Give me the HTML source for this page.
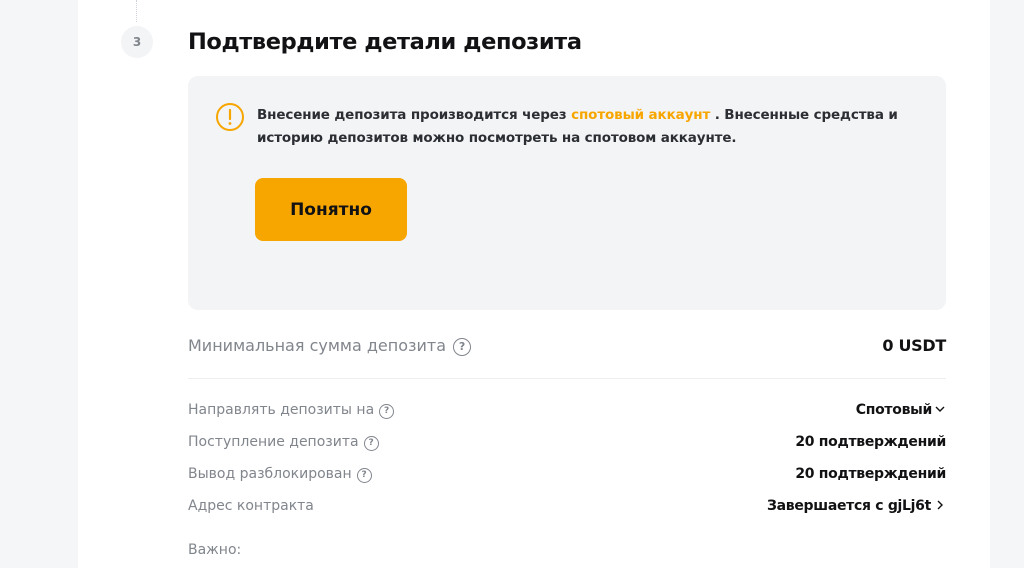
<!DOCTYPE html>
<html><head><meta charset="utf-8"><style>
*{margin:0;padding:0;box-sizing:border-box}
body{width:1024px;height:568px;overflow:hidden;background:#f5f6f8;font-family:"DejaVu Sans","Liberation Sans",sans-serif;color:#121214;position:relative}
.panel{position:absolute;left:78px;top:0;width:912px;height:568px;background:#fff}
.abs{position:absolute;white-space:nowrap}
.step{left:121px;top:26px;width:32px;height:32px;border-radius:50%;background:#f3f4f6;color:#81858c;font-size:12px;font-weight:bold;text-align:center;line-height:32px}
.dots{left:136px;top:0;height:22px;border-left:1px dotted #d0d3d8}
.title{left:188px;top:29px;font-size:22.5px;font-weight:bold;letter-spacing:-0.4px}
.box{left:188px;top:76px;width:758px;height:234px;background:#f3f4f6;border-radius:10px}
.txt{left:257px;top:104px;font-size:13.5px;font-weight:bold;line-height:23px;color:#2b2e33;letter-spacing:-0.13px}
.txt b{color:#f7a600}
.btn{left:255px;top:178px;width:152px;height:63px;background:#f7a600;border-radius:8px;font-size:17px;font-weight:bold;text-align:center;line-height:64px;color:#121214}
.g{color:#81858c}
.q{display:inline-block;width:15px;height:15px;border:1.5px solid #81858c;border-radius:50%;font-size:9px;line-height:12px;text-align:center;vertical-align:1px;font-weight:bold;margin-left:5px;color:#81858c}
.r{right:78px;font-size:14px;font-weight:bold;text-align:right;letter-spacing:-0.3px}
.l{left:188px;font-size:14px}
.hr{left:188px;top:378px;width:758px;border-top:1px solid #eceef0}
</style></head><body>
<div class="panel"></div>
<div class="abs dots"></div>
<div class="abs step">3</div>
<div class="abs title">Подтвердите детали депозита</div>
<div class="abs box"></div>
<svg class="abs" style="left:215px;top:102px" width="30" height="30" viewBox="0 0 30 30"><circle cx="15" cy="15" r="13" fill="none" stroke="#f7a600" stroke-width="2"/><path d="M15 8v9" stroke="#f7a600" stroke-width="2.2" stroke-linecap="round"/><circle cx="15" cy="21.5" r="1.4" fill="#f7a600"/></svg>
<div class="abs txt">Внесение депозита производится через <b>спотовый аккаунт</b> . Внесенные средства и<br>историю депозитов можно посмотреть на спотовом аккаунте.</div>
<div class="abs btn">Понятно</div>
<div class="abs g" style="left:188px;top:336px;font-size:16px">Минимальная сумма депозита<span class="q" style="width:18px;height:18px;line-height:15px;font-size:11px;margin-left:7px">?</span></div>
<div class="abs r" style="top:336px;font-size:16px">0 USDT</div>
<div class="abs hr"></div>
<div class="abs l g" style="top:402px">Направлять депозиты на<span class="q">?</span></div>
<div class="abs r" style="top:402px">Спотовый<svg width="12" height="10" viewBox="0 0 12 10" style="margin-left:2px"><path d="M2 3l4 4 4-4" fill="none" stroke="#121214" stroke-width="1.4"/></svg></div>
<div class="abs l g" style="top:434px">Поступление депозита<span class="q">?</span></div>
<div class="abs r" style="top:434px">20 подтверждений</div>
<div class="abs l g" style="top:466px">Вывод разблокирован<span class="q">?</span></div>
<div class="abs r" style="top:466px">20 подтверждений</div>
<div class="abs l g" style="top:498px">Адрес контракта</div>
<div class="abs r" style="top:498px">Завершается с gjLj6t<svg width="12" height="10" viewBox="0 0 12 10" style="margin-left:3px"><path d="M4 1l4 4-4 4" fill="none" stroke="#121214" stroke-width="1.4"/></svg></div>
<div class="abs l g" style="top:542px">Важно:</div>
</body></html>
